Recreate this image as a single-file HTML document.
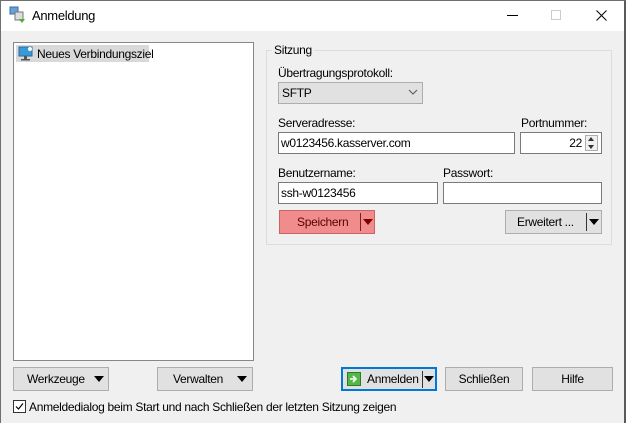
<!DOCTYPE html>
<html><head><meta charset="utf-8"><style>
*{box-sizing:border-box;margin:0;padding:0}
body{width:626px;height:423px;overflow:hidden;background:#fff;font-family:"Liberation Sans",sans-serif;font-size:12px;letter-spacing:-0.3px;color:#000;position:relative}
.win{position:absolute;left:0;top:0;width:626px;height:423px;border-left:1px solid #6f6f6f;border-right:2px solid #5a5a5a;border-top:1px solid #6f6f6f}
.title{position:absolute;left:0;top:0;width:624px;height:31px;background:#fff}
.body{position:absolute;left:0;top:31px;width:624px;height:392px;background:#f0f0f0}
.a{position:absolute}
.inp{position:absolute;background:#fff;border:1px solid #7a7a7a;height:22px;padding:3px 2px;line-height:14px}
.btn{position:absolute;background:#e1e1e1;border:1px solid #adadad;height:24px;text-align:center;line-height:22px}
.tri{position:absolute;width:0;height:0;border-left:5px solid transparent;border-right:5px solid transparent;border-top:6px solid #000}
</style></head><body>
<div class="title"></div>
<div class="body"></div>
<div class="win"></div>
<svg class="a" style="left:9px;top:6px" width="18" height="18" viewBox="0 0 18 18">
<rect x="1" y="1" width="8" height="7" fill="#6aa0d8" stroke="#3a6ea5"/>
<rect x="6" y="6" width="8" height="8" fill="#ddd" stroke="#777"/>
<path d="M10 13 L16 13 L13 17 Z" fill="#4caf30"/>
</svg>
<div class="a" style="left:32px;top:8px;font-size:13px">Anmeldung</div>
<div class="a" style="left:507px;top:15px;width:11px;height:1px;background:#000"></div>
<div class="a" style="left:551px;top:10px;width:10px;height:10px;border:1px solid #ccc"></div>
<svg class="a" style="left:596px;top:10px" width="11" height="11"><path d="M0.5 0.5 L10.5 10.5 M10.5 0.5 L0.5 10.5" stroke="#000" stroke-width="1"/></svg>

<div class="a" style="left:13px;top:42px;width:241px;height:319px;background:#fff;border:1px solid #828790"></div>
<div class="a" style="left:16px;top:45px;width:133px;height:17px;background:#d9d9d9"></div>
<svg class="a" style="left:18px;top:46px" width="16" height="15" viewBox="0 0 16 15"><rect x="1" y="1" width="13" height="9" fill="#3a9ad9" stroke="#2a6aa0"/><rect x="6" y="10" width="3" height="3" fill="#555"/><rect x="3" y="13" width="9" height="1.5" fill="#555"/><circle cx="12" cy="3" r="2" fill="#fff"/></svg>
<div class="a" style="left:37px;top:47px">Neues Verbindungsziel</div>

<div class="a" style="left:266px;top:50px;width:346px;height:195px;border:1px solid #dcdcdc"></div>
<div class="a" style="left:272px;top:43px;background:#f0f0f0;padding:0 2px">Sitzung</div>
<div class="a" style="left:278px;top:66px">Übertragungsprotokoll:</div>
<div class="a" style="left:278px;top:82px;width:145px;height:22px;background:#e1e1e1;border:1px solid #adadad;padding:3px 3px;line-height:14px">SFTP</div>
<svg class="a" style="left:408px;top:89px" width="10" height="7"><path d="M1 1 L5 5 L9 1" fill="none" stroke="#555"/></svg>

<div class="a" style="left:278px;top:116px">Serveradresse:</div>
<div class="inp" style="left:278px;top:132px;width:237px">w0123456.kasserver.com</div>
<div class="a" style="left:521px;top:116px">Portnummer:</div>
<div class="inp" style="left:520px;top:132px;width:82px;text-align:right;padding-right:19px">22</div>
<div class="a" style="left:585px;top:135px;width:13px;height:16px;border:1px solid #adadad;background:#f0f0f0"></div>
<div class="a" style="left:588px;top:137px;width:0;height:0;border-left:3px solid transparent;border-right:3px solid transparent;border-bottom:4px solid #333"></div>
<div class="a" style="left:588px;top:145px;width:0;height:0;border-left:3px solid transparent;border-right:3px solid transparent;border-top:4px solid #333"></div>

<div class="a" style="left:278px;top:166px">Benutzername:</div>
<div class="inp" style="left:278px;top:182px;width:160px">ssh-w0123456</div>
<div class="a" style="left:443px;top:166px">Passwort:</div>
<div class="inp" style="left:443px;top:182px;width:159px"></div>

<div class="btn" style="left:279px;top:210px;width:96px;background:#f08c8c;border-color:#c86464;color:#5a0000;text-align:left;padding-left:17px">Speichern</div>
<div class="a" style="left:360px;top:213px;width:1px;height:18px;background:#7a2020"></div>
<div class="tri" style="left:363px;top:219px;border-top-color:#7a0000"></div>
<div class="btn" style="left:505px;top:210px;width:97px;text-align:left;padding-left:11px">Erweitert ...</div>
<div class="a" style="left:586px;top:213px;width:1px;height:18px;background:#333"></div>
<div class="tri" style="left:589px;top:219px"></div>

<div class="btn" style="left:13px;top:367px;width:96px;text-align:left;padding-left:13px">Werkzeuge</div>
<div class="tri" style="left:94px;top:376px"></div>
<div class="btn" style="left:157px;top:367px;width:96px;text-align:left;padding-left:15px">Verwalten</div>
<div class="tri" style="left:237px;top:376px"></div>
<div class="btn" style="left:341px;top:367px;width:96px;border:2px solid #0078d7;line-height:20px;text-align:left;padding-left:24px">Anmelden</div>
<svg class="a" style="left:347px;top:372px" width="14" height="14"><rect x="0.5" y="0.5" width="13" height="13" fill="#54b848" stroke="#2e7d24"/><path d="M3 7 H9 M6 4 L9 7 L6 10" stroke="#fff" stroke-width="1.6" fill="none"/></svg>
<div class="a" style="left:422px;top:371px;width:1px;height:17px;background:#333"></div>
<div class="tri" style="left:424px;top:376px"></div>
<div class="btn" style="left:445px;top:367px;width:78px">Schließen</div>
<div class="btn" style="left:532px;top:367px;width:81px">Hilfe</div>

<div class="a" style="left:13px;top:400px;width:13px;height:13px;border:1px solid #333;background:#fff"></div>
<svg class="a" style="left:14px;top:401px" width="11" height="11"><path d="M2 5.5 L4.5 8 L9 2.5" stroke="#000" fill="none" stroke-width="1.2"/></svg>
<div class="a" style="left:29px;top:400px">Anmeldedialog beim Start und nach Schließen der letzten Sitzung zeigen</div>
</body></html>
